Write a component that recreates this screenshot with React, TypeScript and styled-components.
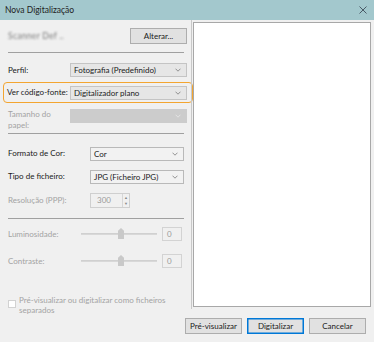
import React from "react";
import styled, { createGlobalStyle } from "styled-components";

const Global = createGlobalStyle`
  html, body { margin: 0; padding: 0; background: #f0f0f0; }
  body { font-family: Lato, "Noto Sans", sans-serif; font-size: 8px; color: #1a1a1a; }
  * { box-sizing: border-box; }
`;

const Window = styled.div`
  width: 374px;
  height: 342px;
  display: flex;
  flex-direction: column;
  background: #f0f0f0;
  overflow: hidden;
`;

const TitleBar = styled.div`
  height: 20px;
  flex: none;
  background: #a3c8cd;
  display: flex;
  align-items: center;
  justify-content: space-between;
  padding: 0 7px 0 5px;
  font-size: 8.5px;
  color: #222;
`;

const Body = styled.div`
  flex: 1;
  display: flex;
`;

const LeftPanel = styled.div`
  width: 191px;
  flex: none;
  display: flex;
  flex-direction: column;
  padding: 8px 4px 0 3px;
`;

const Row = styled.div<{ $h: number; $mt?: number; $pl?: number }>`
  display: flex;
  align-items: center;
  height: ${(p) => p.$h}px;
  margin-top: ${(p) => p.$mt ?? 0}px;
  padding-left: ${(p) => p.$pl ?? 5}px;
  white-space: nowrap;
`;

const Label = styled.span<{ $w: number; $disabled?: boolean }>`
  width: ${(p) => p.$w}px;
  flex: none;
  color: ${(p) => (p.$disabled ? "#a3a3a3" : "#1a1a1a")};
  line-height: 11px;
  white-space: nowrap;
`;

const Blurred = styled.div`
  flex: 1;
  color: #7a7a7a;
  font-size: 8.5px;
  filter: blur(1px);
  letter-spacing: 0.3px;
`;

const Button = styled.button<{ $default?: boolean; $w: number }>`
  width: ${(p) => p.$w}px;
  height: 16px;
  padding: 0;
  font-family: inherit;
  font-size: 8px;
  color: #1a1a1a;
  background: #e1e1e1;
  border: 1px solid ${(p) => (p.$default ? "#0078d7" : "#adadad")};
  box-shadow: ${(p) => (p.$default ? "inset 0 0 0 0.5px #0078d7" : "none")};
`;

const Divider = styled.div<{ $mt: number; $w: number }>`
  height: 1px;
  margin-top: ${(p) => p.$mt}px;
  margin-left: 5px;
  width: ${(p) => p.$w}px;
  background: #a0a0a0;
`;

const Select = styled.div<{ $w: number; $disabled?: boolean; $light?: boolean }>`
  width: ${(p) => p.$w}px;
  height: 14px;
  display: flex;
  align-items: center;
  justify-content: space-between;
  padding: 0 5px 0 3px;
  border: 1px solid ${(p) => (p.$disabled ? "#cccccc" : p.$light ? "#b9b9b9" : "#c4c4c4")};
  background: ${(p) => (p.$disabled ? "#cccccc" : p.$light ? "#f2f2f2" : "#e6e6e6")};
  color: #1a1a1a;
  white-space: nowrap;
`;

const Chevron = ({ color = "#7a7a7a" }: { color?: string }) => (
  <svg width="6" height="4" viewBox="0 0 6 4">
    <path d="M0.5 0.7 L3 3.2 L5.5 0.7" fill="none" stroke={color} strokeWidth="0.8" />
  </svg>
);

const Highlight = styled.div`
  margin-top: 5px;
  height: 21px;
  display: flex;
  align-items: center;
  padding-left: 3px;
  border: 1.4px solid #f3a530;
  border-radius: 4px;
  width: 190px;
  white-space: nowrap;
`;

const TwoLineRow = styled.div`
  display: flex;
  align-items: flex-start;
  margin-top: 6px;
  padding-left: 5px;
  height: 23px;
`;

const Spin = styled.div`
  width: 40px;
  height: 15px;
  display: flex;
  border: 1px solid #cfcfcf;
  background: #f0f0f0;
`;

const SpinValue = styled.span`
  flex: 1;
  padding-left: 6px;
  color: #9a9a9a;
  line-height: 13px;
`;

const SpinArrows = styled.div`
  width: 7px;
  display: flex;
  flex-direction: column;
  border-left: 1px solid #d6d6d6;
  align-items: center;
  justify-content: space-around;
  font-size: 4px;
  color: #888;
`;

const SliderWrap = styled.div`
  width: 76px;
  height: 14px;
  position: relative;
  display: flex;
  align-items: center;
`;

const Track = styled.div`
  width: 100%;
  height: 2px;
  background: #d8d8d8;
  border-top: 1px solid #d0d0d0;
`;

const Thumb = styled.div`
  position: absolute;
  left: 37px;
  top: 1px;
  width: 6px;
  height: 11px;
  background: #c9c9c9;
  clip-path: polygon(50% 0, 100% 25%, 100% 100%, 0 100%, 0 25%);
`;

const NumBox = styled.div`
  width: 20px;
  height: 14px;
  margin-left: 5px;
  border: 1px solid #d3d3d3;
  color: #9a9a9a;
  padding-left: 4px;
  line-height: 12px;
`;

const CheckRow = styled.div`
  display: flex;
  margin-top: 28px;
  padding-left: 5px;
  gap: 3px;
`;

const CheckBox = styled.div`
  width: 8px;
  height: 8px;
  margin-top: 4px;
  border: 1px solid #d2d2d2;
  background: #fff;
  flex: none;
`;

const CheckText = styled.span`
  color: #a3a3a3;
  line-height: 9.5px;
  width: 165px;
`;

const RightColumn = styled.div`
  flex: 1;
  display: flex;
  flex-direction: column;
`;

const PreviewArea = styled.div`
  height: 289px;
  border-left: 1px solid #c8c8c8;
  padding: 2px 2px 2px 1px;
`;

const Preview = styled.div`
  height: 100%;
  background: #fff;
  border: 1px solid #a8a8a8;
  width: 178px;
`;

const ButtonRow = styled.div`
  display: flex;
  gap: 5px;
  margin-top: 9px;
  margin-left: -6px;
`;

export default function App() {
  return (
    <>
      <Global />
      <Window>
        <TitleBar>
          <span>Nova Digitalização</span>
          <svg width="8" height="8" viewBox="0 0 8 8">
            <path d="M0.5 0.5 L7.5 7.5 M7.5 0.5 L0.5 7.5" stroke="#4a5a66" strokeWidth="1" />
          </svg>
        </TitleBar>
        <Body>
          <LeftPanel>
            <Row $h={16}>
              <Blurred>Scanner Def ..</Blurred>
              <Button $w={57}>Alterar...</Button>
            </Row>
            <Divider $mt={8} $w={176} />
            <Row $h={14} $mt={10}>
              <Label $w={62}>Perfil:</Label>
              <Select $w={117}>
                <span>Fotografia (Predefinido)</span>
                <Chevron />
              </Select>
            </Row>
            <Highlight>
              <Label $w={63}>Ver código-fonte:</Label>
              <Select $w={117}>
                <span>Digitalizador plano</span>
                <Chevron />
              </Select>
            </Highlight>
            <TwoLineRow>
              <Label $w={62} $disabled>
                Tamanho do
                <br />
                papel:
              </Label>
              <Select $w={117} $disabled>
                <span />
                <Chevron color="#e8e8e8" />
              </Select>
            </TwoLineRow>
            <Divider $mt={1} $w={176} />
            <Row $h={15} $mt={12}>
              <Label $w={82}>Formato de Cor:</Label>
              <Select $w={94} $light>
                <span>Cor</span>
                <Chevron />
              </Select>
            </Row>
            <Row $h={15} $mt={8}>
              <Label $w={82}>Tipo de ficheiro:</Label>
              <Select $w={94} $light>
                <span>JPG (Ficheiro JPG)</span>
                <Chevron />
              </Select>
            </Row>
            <Row $h={15} $mt={9}>
              <Label $w={82} $disabled>
                Resolução (PPP):
              </Label>
              <Spin>
                <SpinValue>300</SpinValue>
                <SpinArrows>
                  <span>▲</span>
                  <span>▼</span>
                </SpinArrows>
              </Spin>
            </Row>
            <Divider $mt={10} $w={176} />
            <Row $h={14} $mt={8}>
              <Label $w={73} $disabled>
                Luminosidade:
              </Label>
              <SliderWrap>
                <Track />
                <Thumb />
              </SliderWrap>
              <NumBox>0</NumBox>
            </Row>
            <Row $h={14} $mt={13}>
              <Label $w={73} $disabled>
                Contraste:
              </Label>
              <SliderWrap>
                <Track />
                <Thumb />
              </SliderWrap>
              <NumBox>0</NumBox>
            </Row>
            <CheckRow>
              <CheckBox />
              <CheckText>Pré-visualizar ou digitalizar como ficheiros separados</CheckText>
            </CheckRow>
          </LeftPanel>
          <RightColumn>
            <PreviewArea>
              <Preview />
            </PreviewArea>
            <ButtonRow>
              <Button $w={57}>Pré-visualizar</Button>
              <Button $w={57} $default>
                Digitalizar
              </Button>
              <Button $w={57}>Cancelar</Button>
            </ButtonRow>
          </RightColumn>
        </Body>
      </Window>
    </>
  );
}
